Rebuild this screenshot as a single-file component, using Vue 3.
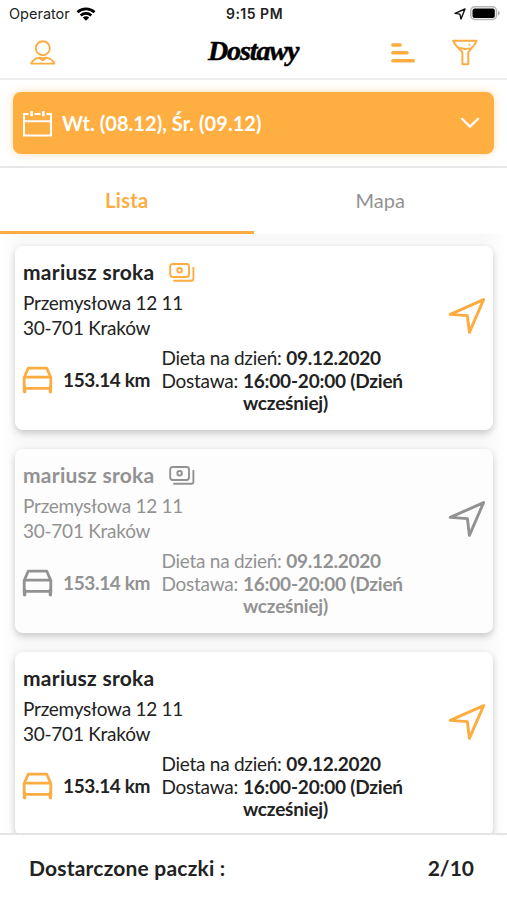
<script setup>
const deliveries = [
  { id: 1, paid: true, done: false },
  { id: 2, paid: true, done: true },
  { id: 3, paid: false, done: false },
].map((d) => ({
  ...d,
  name: 'mariusz sroka',
  street: 'Przemysłowa 12 11',
  city: '30-701 Kraków',
  distance: '153.14 km',
  day: '09.12.2020',
  slot: '16:00-20:00 (Dzień wcześniej)',
}))
</script>

<template>
  <div class="screen">
    <div class="status">
      <div class="carrier">
        <span>Operator</span>
        <svg width="20" height="14" viewBox="0 0 20 14" fill="none" stroke="#000" stroke-width="2.7">
          <path d="M1.5 5.2C6.3.7 13.7.7 18.5 5.2M4.7 8.4c3-2.8 7.6-2.8 10.6 0" />
          <path d="M10 13.8 6.8 10.6c1.8-1.7 4.6-1.7 6.4 0z" fill="#000" stroke="none" />
        </svg>
      </div>
      <span class="clock">9:15 PM</span>
      <div class="indicators">
        <svg width="12" height="12" viewBox="0 0 12 12" fill="none" stroke="#111" stroke-width="1.4" stroke-linejoin="round">
          <path d="M1 5.4 11 1 7 11 5.9 6.1z" />
        </svg>
        <svg width="30" height="15" viewBox="0 0 30 15">
          <rect x=".8" y=".8" width="25.7" height="12.7" rx="4" fill="#fff" stroke="#b5b5b5" stroke-width="1.5" />
          <rect x="2.5" y="2.4" width="22.3" height="9.5" rx="2" />
          <path d="M28 5v4.5c2.2-.8 2.2-3.7 0-4.5" fill="#aaa" />
        </svg>
      </div>
    </div>

    <header class="header">
      <svg class="user" width="26" height="26" viewBox="0 0 26 26" fill="none" stroke="#fdac42" stroke-width="1.9" stroke-linejoin="round">
        <circle cx="12.8" cy="8.2" r="7" />
        <path d="M1.2 23.6c1.2-3.2 4.4-5 8-5.9l3.6 2.6 3.6-2.6c3.6.9 6.8 2.7 8 5.9zM9.2 17.7l3.6.6 3.6-.6" />
      </svg>
      <h1 class="title">Dostawy</h1>
      <svg class="sort" width="24" height="20" viewBox="0 0 24 20" stroke="#fdac42" stroke-width="3.4" stroke-linecap="round">
        <path d="M1.8 2h7.3M1.8 9.8h14.3M1.8 17.8h20.5" />
      </svg>
      <svg class="filter" width="26" height="27" viewBox="0 0 26 27" fill="none" stroke="#fdac42" stroke-width="1.9" stroke-linejoin="round">
        <path d="M1.2 1.8h23.4L23 5 16.3 13.4v11.8H10.4V13.4L2.8 5zM6.5 9.3c2.5-.9 4.5.7 6.7.7s3.8-.8 5.8-.6" />
        <circle cx="17.3" cy="5.8" r="1" fill="#fdac42" stroke="none" />
      </svg>
    </header>

    <div class="picker-bar">
      <button class="picker">
        <svg width="29" height="27" viewBox="0 0 29 27" fill="none" stroke="#fff" stroke-width="2">
          <path d="M5.5 4H1v21.5h27V4h-4.5M11.5 4h6M1 11.3h27" />
          <path d="M8.6 1v5.2M20.4 1v5.2" stroke-width="2.6" />
        </svg>
        <span class="picker-label">Wt. (08.12), Śr. (09.12)</span>
        <svg width="20" height="12" viewBox="0 0 20 12" fill="none" stroke="#fff" stroke-width="2.2" stroke-linecap="round">
          <path d="m2 1.8 8 7.8 8-7.8" />
        </svg>
      </button>
    </div>

    <nav class="tabs">
      <div class="tab active">Lista</div>
      <div class="tab">Mapa</div>
    </nav>

    <main class="list">
      <article v-for="d in deliveries" :key="d.id" class="card" :class="{ done: d.done }">
        <div class="who">
          <span class="name">{{ d.name }}</span>
          <svg v-if="d.paid" class="cash" width="26" height="19" viewBox="0 0 26 19" fill="none" stroke="currentColor" stroke-width="1.9" stroke-linecap="round">
            <rect x="1.2" y="1" width="18.8" height="13" rx="2.4" />
            <circle cx="10.6" cy="7.3" r="2.3" />
            <path d="M24.4 4.8v11q0 2-2 2H5" />
          </svg>
        </div>
        <div class="address">
          <div>{{ d.street }}</div>
          <div>{{ d.city }}</div>
        </div>
        <div class="trip">
          <svg class="car" width="31" height="28" viewBox="0 0 31 28" fill="none" stroke="currentColor" stroke-width="2.8" stroke-linejoin="round">
            <path d="M2.2 22.4V11.5L6.2 2.2h18.6l4 9.3v10.9zM3 11.2h25" />
            <path d="M2.6 21v4.8M28.4 21v4.8" stroke-width="3.4" stroke-linecap="round" />
          </svg>
          <span class="distance">{{ d.distance }}</span>
          <div class="details">
            <div>Dieta na dzień: <b>{{ d.day }}</b></div>
            <div class="slot"><span>Dostawa:</span><b>{{ d.slot }}</b></div>
          </div>
        </div>
        <svg class="arrow" width="38" height="38" viewBox="0 0 38 38" fill="none" stroke="currentColor" stroke-width="2.9" stroke-linejoin="round">
          <path d="M2.2 17.4 35.6 2.6 21.4 35.3 19.4 18.6z" />
        </svg>
      </article>
    </main>

    <footer class="footer">
      <span class="total">Dostarczone paczki :</span>
      <span>2/10</span>
    </footer>
  </div>
</template>

<style>
body {
  margin: 0;
  background: #fff;
}
</style>

<style scoped>
.screen {
  display: flex;
  flex-direction: column;
  width: 507px;
  height: 900px;
  overflow: hidden;
  background: #fff;
  color: #222;
  font-family: Lato, sans-serif;
}
svg {
  display: block;
  flex: none;
}
.status {
  display: grid;
  grid-template-columns: 1fr auto 1fr;
  align-items: center;
  height: 27px;
  padding: 0 7px 0 9px;
  font: 14.5px Inter, sans-serif;
  color: #222;
}
.carrier,
.indicators {
  display: flex;
  align-items: center;
}
.carrier {
  gap: 6px;
}
.indicators {
  justify-content: flex-end;
  gap: 4px;
}
.clock {
  font-weight: 600;
  font-size: 14px;
  letter-spacing: 0.5px;
}
.header {
  display: flex;
  align-items: center;
  box-sizing: border-box;
  height: 53px;
  padding: 0 29px 0 30px;
  border-bottom: 2px solid #eeeef1;
}
.title {
  width: 94px;
  margin: -4px 0 0 152px;
  color: #000;
  font: italic bold 28px/40px "Liberation Serif", serif;
  letter-spacing: -1.1px;
  white-space: nowrap;
  -webkit-text-stroke: 0.5px #000;
}
.sort {
  margin-left: 89px;
}
.filter {
  margin-left: auto;
}
.picker-bar {
  box-sizing: border-box;
  height: 88px;
  padding: 12px 13px 0;
  border-bottom: 2px solid #e7e7e7;
}
.picker {
  display: flex;
  align-items: center;
  box-sizing: border-box;
  width: 100%;
  height: 62px;
  padding: 0 14px 0 10px;
  border: 0;
  border-radius: 8px;
  background: #ffae42;
  box-shadow: 0 0 8px rgba(255, 174, 66, 0.4);
  color: #fff;
}
.picker-label {
  flex: 1;
  margin-left: 10px;
  text-align: left;
  font: 700 20px Lato, sans-serif;
  letter-spacing: 0.05px;
}
.tabs {
  display: flex;
  height: 66px;
}
.tab {
  flex: 1;
  box-sizing: border-box;
  padding-bottom: 3px;
  text-align: center;
  font-size: 20px;
  line-height: 65px;
  color: #929292;
}
.tab.active {
  border-bottom: 3px solid #fdac42;
  color: #fdac42;
  font-weight: 700;
  letter-spacing: 0.3px;
}
.list {
  display: flex;
  flex: 1;
  flex-direction: column;
  gap: 19px;
  min-height: 0;
  overflow: hidden;
  padding: 12px 14px 0 15px;
  background: linear-gradient(90deg, #fff, #f8f8f8 24px, #f8f8f8 483px, #fff);
}
.card {
  display: grid;
  grid-template-columns: 1fr auto;
  grid-template-rows: 44px 51px 1fr;
  box-sizing: border-box;
  flex: none;
  height: 184px;
  padding: 0 7px 0 8px;
  border-radius: 8px;
  background: #fff;
  box-shadow: 0 3px 7px rgba(0, 0, 0, 0.2);
  color: #222;
}
.who {
  display: flex;
  align-items: center;
  gap: 15px;
  height: 52px;
}
.name {
  margin-top: -2px;
  font-size: 21px;
  font-weight: 700;
  letter-spacing: 0.27px;
}
.cash,
.car,
.arrow {
  color: #fdac42;
}
.address {
  grid-row: 2;
  font-size: 19px;
  line-height: 25px;
  letter-spacing: -0.25px;
}
.arrow {
  grid-column: 2;
  grid-row: 2;
  align-self: center;
}
.trip {
  grid-row: 3;
  grid-column: 1 / 3;
  display: flex;
  align-items: flex-start;
  padding-top: 6px;
  font-size: 19px;
  line-height: 22.7px;
  white-space: nowrap;
}
.car {
  margin-top: 19px;
  margin-left: -1px;
}
.distance {
  width: 98.5px;
  margin: 22px 0 0 10px;
  font-weight: 700;
  letter-spacing: -0.35px;
}
.details {
  letter-spacing: -0.26px;
}
.slot {
  display: flex;
  gap: 5px;
}
.slot b {
  width: 170px;
  white-space: normal;
  letter-spacing: -0.2px;
}
.card.done {
  background: #fdfdfd;
  color: #929292;
}
.done .cash,
.done .car,
.done .arrow {
  color: #929292;
}
.footer {
  display: flex;
  align-items: center;
  justify-content: space-between;
  box-sizing: border-box;
  height: 67px;
  padding: 0 33px 0 29px;
  border-top: 2px solid #e4e4e4;
  background: #fff;
  font-size: 21px;
  font-weight: 700;
}
.total {
  letter-spacing: 0.2px;
}
</style>
